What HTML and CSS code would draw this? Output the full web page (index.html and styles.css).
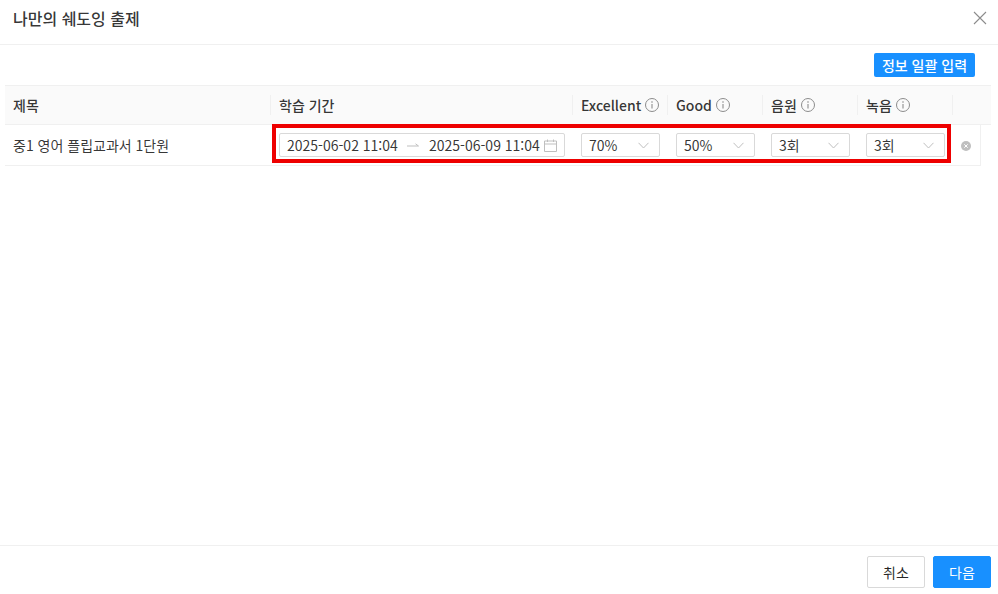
FILE: index.html
```html
<!DOCTYPE html>
<html lang="ko">
<head>
<meta charset="utf-8">
<title>나만의 쉐도잉 출제</title>
<link rel="stylesheet" href="styles.css">
</head>
<body>
<div class="modal">
  <header class="modal-head">
    <h1 class="modal-title">나만의 쉐도잉 출제</h1>
    <svg class="close" width="14" height="14" viewBox="0 0 14 14"><path d="M1 1l12 12M13 1L1 13" stroke="#8c8c8c" stroke-width="1.1" fill="none"/></svg>
  </header>
  <main class="modal-body">
    <div class="toolbar"><button class="bulk">정보 일괄 입력</button></div>
    <div class="table">
      <div class="row head">
        <div class="th"><span>제목</span></div>
        <div class="th sep"><span>학습 기간</span></div>
        <div class="th sep"><span>Excellent</span><svg class="info" width="14" height="14" viewBox="0 0 14 14"><circle cx="7" cy="7" r="6.5" fill="none" stroke="#8c8c8c"/><path d="M7 6v4.4" stroke="#8c8c8c" stroke-width="1.1"/><circle cx="7" cy="4" r=".8" fill="#8c8c8c"/></svg></div>
        <div class="th sep"><span>Good</span><svg class="info" width="14" height="14" viewBox="0 0 14 14"><circle cx="7" cy="7" r="6.5" fill="none" stroke="#8c8c8c"/><path d="M7 6v4.4" stroke="#8c8c8c" stroke-width="1.1"/><circle cx="7" cy="4" r=".8" fill="#8c8c8c"/></svg></div>
        <div class="th sep"><span>음원</span><svg class="info" width="14" height="14" viewBox="0 0 14 14"><circle cx="7" cy="7" r="6.5" fill="none" stroke="#8c8c8c"/><path d="M7 6v4.4" stroke="#8c8c8c" stroke-width="1.1"/><circle cx="7" cy="4" r=".8" fill="#8c8c8c"/></svg></div>
        <div class="th sep"><span>녹음</span><svg class="info" width="14" height="14" viewBox="0 0 14 14"><circle cx="7" cy="7" r="6.5" fill="none" stroke="#8c8c8c"/><path d="M7 6v4.4" stroke="#8c8c8c" stroke-width="1.1"/><circle cx="7" cy="4" r=".8" fill="#8c8c8c"/></svg></div>
        <div class="th sep"></div>
      </div>
      <div class="row body">
        <div class="td">중1 영어 플립교과서 1단원</div>
        <div class="td">
          <div class="range">
            <span class="date">2025-06-02 11:04</span>
            <svg class="arrow" width="12" height="8" viewBox="0 0 12 8"><path d="M0 5h11.5L8.5 2.8" stroke="#bfbfbf" fill="none"/></svg>
            <span class="date">2025-06-09 11:04</span>
            <svg class="cal" width="13" height="13" viewBox="0 0 13 13"><path d="M.5 2h12v10.5H.5zM.5 5h12M3.5 .5v2.5M9.5 .5v2.5" stroke="#bfbfbf" fill="none"/></svg>
          </div>
        </div>
        <div class="td"><div class="select"><span>70%</span><svg class="chev" width="11" height="7" viewBox="0 0 11 7"><path d="M.5 .8L5.5 6l5-5.2" stroke="#bfbfbf" fill="none"/></svg></div></div>
        <div class="td"><div class="select"><span>50%</span><svg class="chev" width="11" height="7" viewBox="0 0 11 7"><path d="M.5 .8L5.5 6l5-5.2" stroke="#bfbfbf" fill="none"/></svg></div></div>
        <div class="td"><div class="select"><span>3회</span><svg class="chev" width="11" height="7" viewBox="0 0 11 7"><path d="M.5 .8L5.5 6l5-5.2" stroke="#bfbfbf" fill="none"/></svg></div></div>
        <div class="td"><div class="select"><span>3회</span><svg class="chev" width="11" height="7" viewBox="0 0 11 7"><path d="M.5 .8L5.5 6l5-5.2" stroke="#bfbfbf" fill="none"/></svg></div></div>
        <div class="td end"><svg class="del" width="10" height="10" viewBox="0 0 10 10"><circle cx="5" cy="5" r="5" fill="#bfbfbf"/><path d="M3.3 3.3l3.4 3.4M6.7 3.3l-3.4 3.4" stroke="#fff"/></svg></div>
      </div>
      <div class="highlight"></div>
    </div>
  </main>
  <footer class="modal-foot">
    <button class="btn">취소</button>
    <button class="btn primary">다음</button>
  </footer>
</div>
</body>
</html>
```
FILE: styles.css
```css
* { box-sizing: border-box; }
html, body { margin: 0; height: 100%; }
body {
  background: #fff;
  color: rgba(0,0,0,.8);
  font-family: "Noto Sans CJK KR", "Noto Sans", sans-serif;
  font-size: 14px;
  overflow: hidden;
}
.modal { height: 594px; display: flex; flex-direction: column; }
.modal-head {
  height: 45px;
  border-bottom: 1px solid #f0f0f0;
  padding: 0 11px 8px 13px;
  display: flex;
  align-items: center;
  justify-content: space-between;
}
.modal-title { margin: 0; font-size: 16px; font-weight: 500; line-height: 24px; }
.modal-body { flex: 1; padding: 8px 7px 0 5px; }
.toolbar { display: flex; justify-content: flex-end; padding-right: 16px; margin-bottom: 8px; }
.bulk {
  width: 101px; height: 24px; padding: 0;
  background: #1890ff; color: #fff; border: 0; border-radius: 2px;
  font: 500 14px/24px "Noto Sans CJK KR", sans-serif;
}
.table { position: relative; }
.row { display: grid; grid-template-columns: 266px 302px 95px 95px 95px 95px 28px; }
.head { background: #fafafa; height: 40px; width: 986px; grid-template-columns: 266px 302px 95px 95px 95px 95px 38px; border-top: 1px solid #f0f0f0; border-bottom: 1px solid #f0f0f0; }
.th { display: flex; align-items: center; gap: 4px; padding-left: 8px; font-weight: 500; position: relative; }
.th.sep::before {
  content: ""; position: absolute; left: -1px; top: 9px; bottom: 9px; width: 1px; background: #f0f0f0;
}
.info { flex: none; }
.body { height: 41px; width: 976px; border-bottom: 1px solid #f0f0f0; border-right: 1px solid #f0f0f0; }
.td { display: flex; align-items: center; padding-left: 8px; }
.td.end { padding-left: 8px; }
.del { margin-top: 1px; }
.range, .select {
  height: 24px; border: 1px solid #d9d9d9; border-radius: 2px; display: flex; align-items: center; background: #fff; line-height: 22px;
}
.range { width: 286px; padding: 0 7px; }
.date { width: 113px; white-space: nowrap; }
.arrow { margin: 0 10px 0 7px; flex: none; }
.cal { margin-left: 2px; flex: none; }
.select { width: 79px; padding: 0 10px 0 7px; justify-content: space-between; }
.highlight {
  position: absolute; left: 267px; top: 39px; width: 679px; height: 39px; border: 4px solid #ee0000; pointer-events: none;
}
.modal-foot {
  height: 49px; border-top: 1px solid #f0f0f0; padding: 10px 7px 0 0;
  display: flex; justify-content: flex-end; gap: 8px; margin-top: auto;
}
.btn {
  width: 58px; height: 32px; padding: 0; background: #fff; border: 1px solid #d9d9d9; border-radius: 2px;
  color: rgba(0,0,0,.85); font: 400 14px/22px "Noto Sans CJK KR", sans-serif;
}
.btn.primary { background: #1890ff; border-color: #1890ff; color: #fff; }
```
